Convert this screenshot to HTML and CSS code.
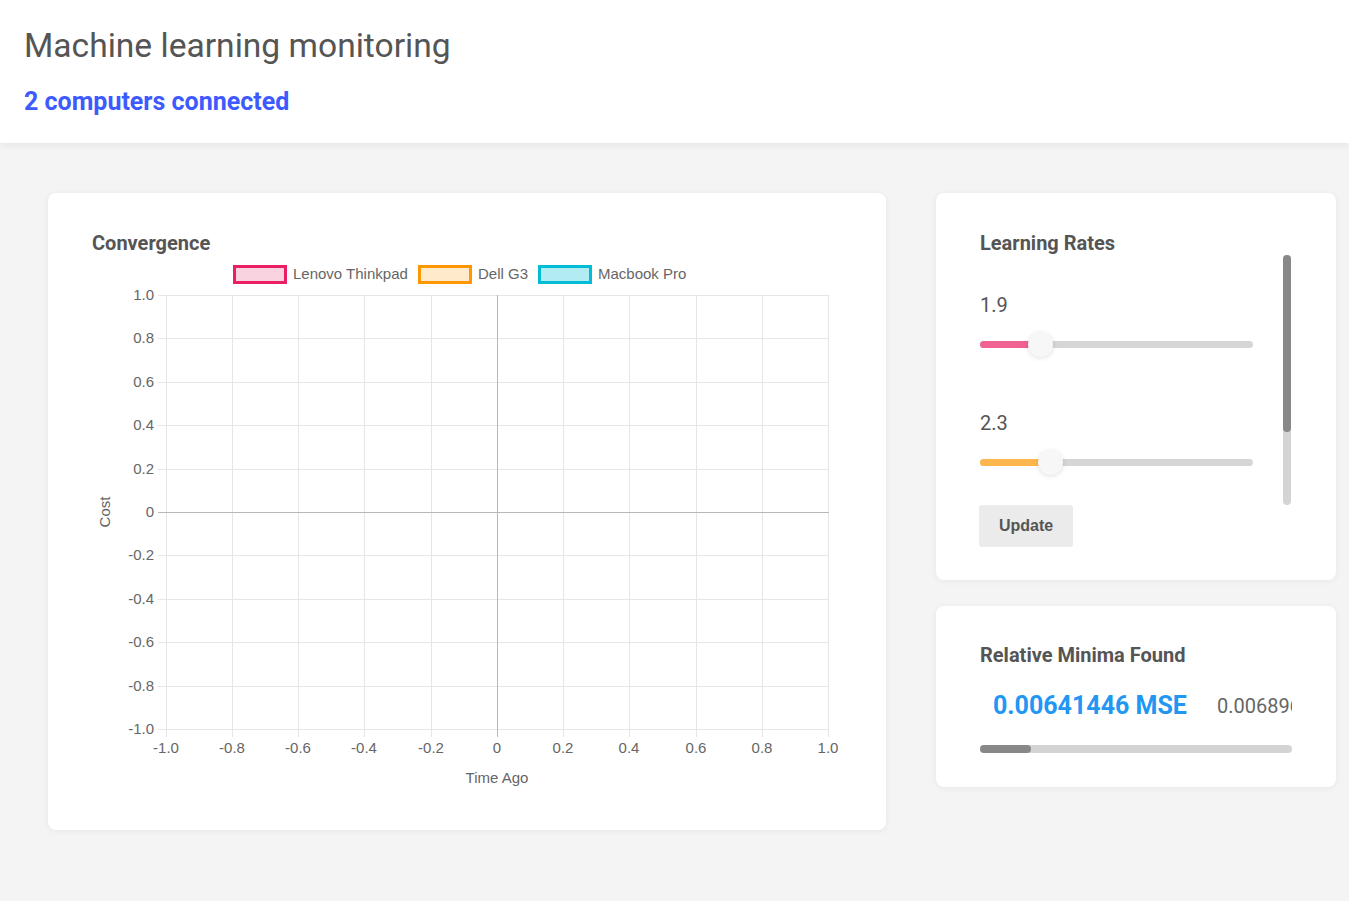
FILE: index.html
```html
<!DOCTYPE html>
<html lang="en">
<head>
<meta charset="utf-8">
<title>Machine learning monitoring</title>
<link rel="stylesheet" href="styles.css">
</head>
<body>
<header class="topbar">
  <h1 class="title">Machine learning monitoring</h1>
  <div class="status">2 computers connected</div>
</header>
<main class="dashboard">
  <section class="card card-chart">
    <h2 class="card-title">Convergence</h2>
    <svg class="chart" width="750" height="532" viewBox="0 0 750 532">
      <g class="legend">
        <rect x="142.5" y="8.5" width="51" height="16" fill="#f9d3e0" stroke="#e91e63" stroke-width="3"/>
        <text x="201" y="21">Lenovo Thinkpad</text>
        <rect x="327.5" y="8.5" width="51" height="16" fill="#ffeacc" stroke="#ff9800" stroke-width="3"/>
        <text x="386" y="21">Dell G3</text>
        <rect x="447.5" y="8.5" width="51" height="16" fill="#b2ebf2" stroke="#00bcd4" stroke-width="3"/>
        <text x="506" y="21">Macbook Pro</text>
      </g>
      <g class="grid">
        <line x1="74.5" y1="37" x2="74.5" y2="479"/>
        <line x1="140.5" y1="37" x2="140.5" y2="479"/>
        <line x1="206.5" y1="37" x2="206.5" y2="479"/>
        <line x1="272.5" y1="37" x2="272.5" y2="479"/>
        <line x1="339.5" y1="37" x2="339.5" y2="479"/>
        <line x1="471.5" y1="37" x2="471.5" y2="479"/>
        <line x1="537.5" y1="37" x2="537.5" y2="479"/>
        <line x1="604.5" y1="37" x2="604.5" y2="479"/>
        <line x1="670.5" y1="37" x2="670.5" y2="479"/>
        <line x1="736.5" y1="37" x2="736.5" y2="479"/>
        <line x1="66" y1="37.5" x2="737" y2="37.5"/>
        <line x1="66" y1="80.5" x2="737" y2="80.5"/>
        <line x1="66" y1="124.5" x2="737" y2="124.5"/>
        <line x1="66" y1="167.5" x2="737" y2="167.5"/>
        <line x1="66" y1="211.5" x2="737" y2="211.5"/>
        <line x1="66" y1="297.5" x2="737" y2="297.5"/>
        <line x1="66" y1="341.5" x2="737" y2="341.5"/>
        <line x1="66" y1="384.5" x2="737" y2="384.5"/>
        <line x1="66" y1="428.5" x2="737" y2="428.5"/>
        <line x1="66" y1="471.5" x2="737" y2="471.5"/>
      </g>
      <g class="zero">
        <line x1="66" y1="254.5" x2="737" y2="254.5"/>
        <line x1="405.5" y1="37" x2="405.5" y2="479"/>
      </g>
      <g class="ticks-y">
        <text x="62" y="42">1.0</text>
        <text x="62" y="85">0.8</text>
        <text x="62" y="129">0.6</text>
        <text x="62" y="172">0.4</text>
        <text x="62" y="216">0.2</text>
        <text x="62" y="259">0</text>
        <text x="62" y="302">-0.2</text>
        <text x="62" y="346">-0.4</text>
        <text x="62" y="389">-0.6</text>
        <text x="62" y="433">-0.8</text>
        <text x="62" y="476">-1.0</text>
      </g>
      <g class="ticks-x">
        <text x="74" y="495">-1.0</text>
        <text x="140" y="495">-0.8</text>
        <text x="206" y="495">-0.6</text>
        <text x="272" y="495">-0.4</text>
        <text x="339" y="495">-0.2</text>
        <text x="405" y="495">0</text>
        <text x="471" y="495">0.2</text>
        <text x="537" y="495">0.4</text>
        <text x="604" y="495">0.6</text>
        <text x="670" y="495">0.8</text>
        <text x="736" y="495">1.0</text>
      </g>
      <text class="axis-title" x="405" y="525">Time Ago</text>
      <text class="axis-title" transform="translate(17.5 254) rotate(-90)">Cost</text>
    </svg>
  </section>

  <div class="side">
    <section class="card card-rates">
      <h2 class="card-title">Learning Rates</h2>
      <div class="rates-scroll">
        <div class="rates-list">
          <div class="rate">
            <div class="rate-value">1.9</div>
            <div class="slider">
              <div class="slider-fill fill-pink" style="width:60px"></div>
              <div class="slider-thumb" style="left:60px"></div>
            </div>
          </div>
          <div class="rate">
            <div class="rate-value">2.3</div>
            <div class="slider">
              <div class="slider-fill fill-orange" style="width:70px"></div>
              <div class="slider-thumb" style="left:70px"></div>
            </div>
          </div>
          <div class="rate">
            <div class="rate-value">2.1</div>
            <div class="slider">
              <div class="slider-fill fill-cyan" style="width:65px"></div>
              <div class="slider-thumb" style="left:65px"></div>
            </div>
          </div>
        </div>
        <div class="vbar"><div class="vbar-thumb"></div></div>
      </div>
      <button class="btn" type="button">Update</button>
    </section>

    <section class="card card-minima">
      <h2 class="card-title">Relative Minima Found</h2>
      <div class="minima-scroll">
        <div class="minima-clip">
          <div class="minima-row">
            <span class="minima minima-best">0.00641446 MSE</span>
            <span class="minima">0.00689612 MSE</span>
            <span class="minima">0.00712384 MSE</span>
            <span class="minima">0.00745021 MSE</span>
            <span class="minima">0.00781936 MSE</span>
            <span class="minima">0.00802417 MSE</span>
            <span class="minima">0.00836650 MSE</span>
            <span class="minima">0.00871203 MSE</span>
            <span class="minima">0.00912874 MSE</span>
            <span class="minima">0.00958316 MSE</span>
          </div>
        </div>
        <div class="hbar"><div class="hbar-thumb"></div></div>
      </div>
    </section>
  </div>
</main>
</body>
</html>
```

FILE: styles.css
```css
* {
  box-sizing: border-box;
}

html, body {
  margin: 0;
  padding: 0;
}

body {
  background: #f4f4f4;
  font-family: Roboto, "Liberation Sans", Arial, sans-serif;
  color: #555;
  min-height: 901px;
}

.topbar {
  position: relative;
  z-index: 1;
  background: #fff;
  padding: 26px 24px 26px;
  box-shadow: 0 2px 8px rgba(0, 0, 0, 0.07);
}

.title {
  margin: 0 0 21px;
  font-size: 33.6px;
  line-height: 40px;
  font-weight: 400;
  color: #555;
}

.status {
  font-size: 25px;
  line-height: 30px;
  font-weight: 700;
  color: #3d5afe;
}

.dashboard {
  display: flex;
  align-items: flex-start;
  gap: 50px;
  padding: 50px 13px 40px 48px;
}

.card {
  background: #fff;
  border-radius: 8px;
  box-shadow: 0 1px 6px rgba(0, 0, 0, 0.06);
  padding: 39px 44px 40px;
}

.card-title {
  margin: 0;
  font-size: 20px;
  line-height: 22px;
  font-weight: 700;
  color: #555;
}

.card-chart {
  width: 838px;
  height: 637px;
}

.chart {
  display: block;
  margin-top: 4px;
  font-family: "Liberation Sans", Arial, sans-serif;
  font-size: 15px;
}

.chart text {
  fill: #666;
}

.grid line {
  stroke: #e6e6e6;
  stroke-width: 1;
}

.zero line {
  stroke: #b8b8b8;
  stroke-width: 1;
}

.ticks-y text {
  text-anchor: end;
}

.ticks-x text,
.axis-title {
  text-anchor: middle;
}

.side {
  width: 400px;
  display: flex;
  flex-direction: column;
  gap: 26px;
}

.card-rates {
  padding-bottom: 33px;
}

.rates-scroll {
  display: flex;
  height: 250px;
  margin-top: 1px;
}

.rates-list {
  flex: 1;
  overflow: hidden;
}

.vbar {
  width: 8px;
  height: 100%;
  margin-right: 1px;
  background: #d4d4d4;
  border-radius: 4px;
}

.vbar-thumb {
  height: 177px;
  background: #888;
  border-radius: 4px;
}

.rate {
  height: 118px;
  padding-top: 38px;
}

.rate-value {
  font-size: 20px;
  line-height: 24px;
  color: #555;
}

.slider {
  position: relative;
  width: 273px;
  height: 7px;
  margin-top: 24px;
  background: #d6d6d6;
  border-radius: 4px;
}

.slider-fill {
  height: 100%;
  border-radius: 4px 0 0 4px;
}

.fill-pink {
  background: #f06292;
}

.fill-orange {
  background: #ffb74d;
}

.fill-cyan {
  background: #4dd0e1;
}

.slider-thumb {
  position: absolute;
  top: 50%;
  width: 25px;
  height: 25px;
  margin: -12.5px 0 0 -12.5px;
  border-radius: 50%;
  background: #f7f7f7;
  box-shadow: 0 1px 5px rgba(0, 0, 0, 0.13);
}

.btn {
  display: block;
  width: 94px;
  height: 42px;
  margin-left: -1px;
  padding: 0;
  border: none;
  border-radius: 3px;
  background: #ebebeb;
  font-family: "Liberation Sans", Arial, sans-serif;
  font-size: 16px;
  font-weight: 700;
  color: #555;
}

.card-minima {
  padding-top: 38px;
  padding-bottom: 34px;
}

.minima-scroll {
  margin-top: 20px;
}

.minima-clip {
  overflow: hidden;
}

.minima-row {
  display: flex;
  align-items: center;
  gap: 30px;
  width: max-content;
  height: 59px;
  padding: 0 0 19px 13px;
}

.minima {
  font-size: 20px;
  line-height: 40px;
  color: #666;
  white-space: nowrap;
}

.minima-best {
  font-size: 25px;
  font-weight: 700;
  color: #2196f3;
}

.hbar {
  height: 8px;
  background: #d4d4d4;
  border-radius: 4px;
}

.hbar-thumb {
  width: 51px;
  height: 100%;
  background: #888;
  border-radius: 4px;
}
```
